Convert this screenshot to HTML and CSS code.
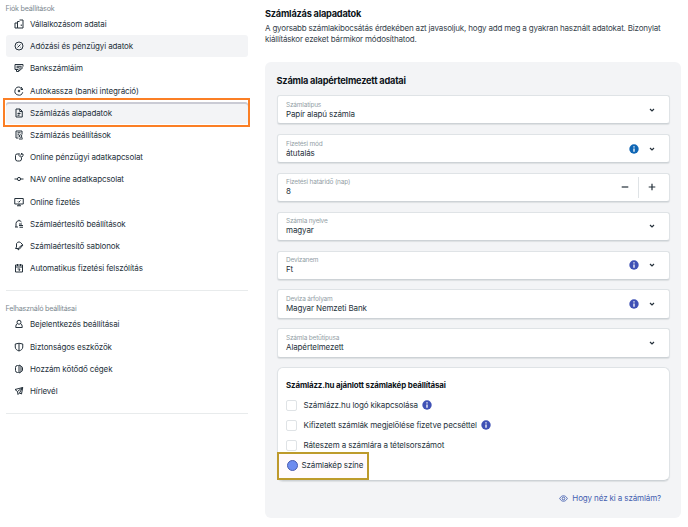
FILE: index.html
```html
<!DOCTYPE html>
<html lang="hu">
<head>
  <meta charset="UTF-8">
  <meta name="viewport" content="width=device-width, initial-scale=1.0">
  <title>Számlázás alapadatok</title>
  <link rel="stylesheet" href="styles.css">
</head>
<body>
  <!-- Oldalsáv -->
  <aside class="sidebar">
    <div class="menu-title">Fiók beállítások</div>
    <nav class="menu">
      <a class="menu-item"><svg class="icon" viewBox="0 0 20 20"><path d="M2 8h5v10H2zM7 18V5h4M11 2h7v16H7M14.500 11v3"/></svg>Vállalkozásom adatai</a>
      <a class="menu-item hovered"><svg class="icon" viewBox="0 0 20 20"><circle cx="10" cy="10" r="8"/><path d="M7 13l6-6M7 7.500h1M12 12.500h1"/></svg>Adózási és pénzügyi adatok</a>
      <a class="menu-item"><svg class="icon" viewBox="0 0 20 20"><path d="M18 7V3H2v10h6M5 6.500h10M5 9.500h6M5 13v4h4l9-8M9 17l1-4 6-6"/></svg>Bankszámláim</a>
      <a class="menu-item"><svg class="icon" viewBox="0 0 20 20"><path d="M12 2.500a8 8 0 1 0 5.500 10M14 2v5h4M17 6l-3-4"/><path class="solid" d="M10 7l3 3-3 3-3-3z"/></svg>Autokassza (banki integráció)</a>
      <a class="menu-item active"><svg class="icon" viewBox="0 0 20 20"><path d="M4 2h8l4.500 4.500V18H4zM11.500 2v5h5M7 11h6M7 14.500h4M10 9v4"/></svg>Számlázás alapadatok</a>
      <a class="menu-item"><svg class="icon" viewBox="0 0 20 20"><path d="M16 9V2H4v14h5M7 5.500h6M7 8.500h3M7 12h2"/><circle cx="13" cy="12" r="2.500"/><path d="M10 18h7M15 14l2 3"/></svg>Számlázás beállítások</a>
      <a class="menu-item"><svg class="icon" viewBox="0 0 20 20"><path d="M9 4H6a3 3 0 0 0-3 3v7a4 4 0 0 0 4 4h4a4 4 0 0 0 4-4v-3M10 2v5l3 3h3l2-3V4h-3V2M15 4l-2 3"/></svg>Online pénzügyi adatkapcsolat</a>
      <a class="menu-item"><svg class="icon" viewBox="0 0 20 20"><circle cx="10" cy="10" r="3.200"/><path d="M1 10h5.500M13.500 10H19"/></svg>NAV online adatkapcsolat</a>
      <a class="menu-item"><svg class="icon" viewBox="0 0 20 20"><path d="M1.500 3h17v11h-17zM6 17.500h8M10 14v3M8 9l1.500 1.500L13 7"/></svg>Online fizetés</a>
      <a class="menu-item"><svg class="icon" viewBox="0 0 20 20"><path d="M2 16h6M4 16V9a6 6 0 0 1 11-3M9 2.500h2M10 10h6M10 13h8M11 16.500h7"/></svg>Számlaértesítő beállítások</a>
      <a class="menu-item"><svg class="icon" viewBox="0 0 20 20"><path d="M8 15H3l2-3V8a5 5 0 0 1 8-5l4 4M8 18l1-4 8-7 1 1-7 8z"/></svg>Számlaértesítő sablonok</a>
      <a class="menu-item"><svg class="icon" viewBox="0 0 20 20"><path d="M3 4h14v14H3zM3 8h14M7 2v4M13 2v4M7 12h5l-2 4"/></svg>Automatikus fizetési felszólítás</a>
    </nav>
    <div class="menu-title second">Felhasználó beállításai</div>
    <nav class="menu last">
      <a class="menu-item"><svg class="icon" viewBox="0 0 20 20"><circle cx="10" cy="6.500" r="4"/><path d="M7 9c-2.500 1-3.500 4-3.500 8h13c0-4-1-7-3.500-8"/></svg>Bejelentkezés beállításai</a>
      <a class="menu-item"><svg class="icon" viewBox="0 0 20 20"><path d="M10 2.500L17.500 4v6c0 4-3 6.500-7.500 8-4.500-1.500-7.500-4-7.500-8V4zM10 3v15"/></svg>Biztonságos eszközök</a>
      <a class="menu-item"><svg class="icon" viewBox="0 0 20 20"><path d="M9 3H7a4 4 0 0 0-4 4v6a4 4 0 0 0 4 4h2M10 2v16l4-2V4zM14 5c2 0 3 1 3 3v4c0 2-1 3-3 3"/></svg>Hozzám kötődő cégek</a>
      <a class="menu-item"><svg class="icon" viewBox="0 0 20 20"><path d="M17.500 3L2 7l5 4 1 6 3-3 4 2zM7 11l10-8-6 11"/></svg>Hírlevél</a>
    </nav>
  </aside>

  <!-- Tartalom -->
  <main class="content">
    <h1>Számlázás alapadatok</h1>
    <p class="lead">A gyorsabb számlakibocsátás érdekében azt javasoljuk, hogy add meg a gyakran használt adatokat. Bizonylat<br>kiállításkor ezeket bármikor módosíthatod.</p>

    <section class="panel">
      <h2>Számla alapértelmezett adatai</h2>
      <div class="fields">
        <div class="field">
          <div class="field-text"><label>Számlatípus</label><span>Papír alapú számla</span></div>
          <svg class="chevron" viewBox="0 0 6 6"><path d="M1 2l2 2 2-2"/></svg>
        </div>
        <div class="field">
          <div class="field-text"><label>Fizetési mód</label><span>átutalás</span></div>
          <svg class="info blue" viewBox="0 0 10 10"><circle cx="5" cy="5" r="4.700"/><path d="M5 2.300v1.200M5 4.500v3.200"/></svg>
          <svg class="chevron" viewBox="0 0 6 6"><path d="M1 2l2 2 2-2"/></svg>
        </div>
        <div class="field">
          <div class="field-text"><label>Fizetési határidő (nap)</label><span>8</span></div>
          <svg class="step" viewBox="0 0 8 8"><path d="M.7 4h6.600"/></svg>
          <i class="divider"></i>
          <svg class="step" viewBox="0 0 8 8"><path d="M.7 4h6.600M4 .7v6.600"/></svg>
        </div>
        <div class="field">
          <div class="field-text"><label>Számla nyelve</label><span>magyar</span></div>
          <svg class="chevron" viewBox="0 0 6 6"><path d="M1 2l2 2 2-2"/></svg>
        </div>
        <div class="field">
          <div class="field-text"><label>Devizanem</label><span>Ft</span></div>
          <svg class="info" viewBox="0 0 10 10"><circle cx="5" cy="5" r="4.700"/><path d="M5 2.300v1.200M5 4.500v3.200"/></svg>
          <svg class="chevron" viewBox="0 0 6 6"><path d="M1 2l2 2 2-2"/></svg>
        </div>
        <div class="field">
          <div class="field-text"><label>Deviza árfolyam</label><span>Magyar Nemzeti Bank</span></div>
          <svg class="info" viewBox="0 0 10 10"><circle cx="5" cy="5" r="4.700"/><path d="M5 2.300v1.200M5 4.500v3.200"/></svg>
          <svg class="chevron" viewBox="0 0 6 6"><path d="M1 2l2 2 2-2"/></svg>
        </div>
        <div class="field">
          <div class="field-text"><label>Számla betűtípusa</label><span>Alapértelmezett</span></div>
          <svg class="chevron" viewBox="0 0 6 6"><path d="M1 2l2 2 2-2"/></svg>
        </div>
      </div>

      <div class="card">
        <h3>Számlázz.hu ajánlott számlakép beállításai</h3>
        <div class="check"><i class="box"></i><span>Számlázz.hu logó kikapcsolása</span>
          <svg class="info" viewBox="0 0 10 10"><circle cx="5" cy="5" r="4.700"/><path d="M5 2.300v1.200M5 4.500v3.200"/></svg></div>
        <div class="check"><i class="box"></i><span>Kifizetett számlák megjelölése fizetve pecséttel</span>
          <svg class="info" viewBox="0 0 10 10"><circle cx="5" cy="5" r="4.700"/><path d="M5 2.300v1.200M5 4.500v3.200"/></svg></div>
        <div class="check"><i class="box"></i><span>Ráteszem a számlára a tételsorszámot</span></div>
        <div class="color-row"><i class="dot"></i><span>Számlakép színe</span></div>
      </div>

      <a class="preview">
        <svg class="eye" viewBox="0 0 20 20"><path d="M1.500 10C4 5.500 7 4 10 4s6 1.500 8.500 6c-2.500 4.500-5.500 6-8.500 6s-6-1.500-8.500-6z"/><circle cx="10" cy="10" r="3"/></svg>
        <span>Hogy néz ki a számlám?</span>
      </a>
    </section>
  </main>
</body>
</html>
```

FILE: styles.css
```css
* {
  box-sizing: border-box;
}

body {
  font-family: Inter, sans-serif;
  margin: 0;
  height: 527px;
  background: #fff;
  color: #25313b;
  display: flex;
  font-size: 8px;
  letter-spacing: -0.12px;
  overflow: hidden;
}

h1, h2, h3, p {
  margin: 0;
  white-space: nowrap;
}

svg {
  flex: none;
  fill: none;
  stroke: currentColor;
}

/* Oldalsáv */
.sidebar {
  width: 248px;
  flex: none;
  padding: 4px 0 0 5.500px;
}

.menu-title {
  font-size: 7.200px;
  line-height: 9px;
  height: 9px;
  letter-spacing: -0.23px;
  color: #7c898f;
}

.menu-title.second {
  margin-top: 13px;
}

.menu {
  border-bottom: 1.500px solid #e8ebec;
  padding-bottom: 11px;
}

.menu-item {
  display: flex;
  align-items: center;
  height: 22.200px;
  padding-left: 8.500px;
  gap: 6px;
  border-radius: 3px;
  white-space: nowrap;
}

.icon {
  width: 10px;
  height: 10px;
  stroke-width: 2;
}

.icon .solid {
  fill: currentColor;
  stroke: none;
}

.hovered {
  background: #f3f4f6;
}

.active {
  position: relative;
  background: #f3f4f6;
  box-shadow: inset 0 2px 0 #cacbd4;
}

/* Kiemelés az aktív elem körül */
.active::after {
  content: "";
  position: absolute;
  inset: -4px -2px -3px -3px;
  border: 2px solid #fb7f25;
}

/* Tartalom */
.content {
  margin-left: 17px;
  width: 416px;
  padding-top: 8px;
}

h1 {
  font-size: 9.200px;
  line-height: 12px;
  letter-spacing: -0.22px;
  color: #0c1218;
}

.lead {
  margin-top: 3px;
  font-size: 8px;
  line-height: 11px;
  letter-spacing: -0.185px;
  color: #36424b;
}

.panel {
  margin-top: 17px;
  height: 456px;
  padding: 11px 11px 0 11.500px;
  background: #f3f4f6;
  border-radius: 6px;
}

h2 {
  font-size: 9.200px;
  line-height: 15px;
  letter-spacing: -0.2px;
  color: #0c1218;
}

.fields {
  display: flex;
  flex-direction: column;
  gap: 9.500px;
  margin-top: 7px;
}

.field {
  display: flex;
  align-items: center;
  height: 29.400px;
  padding: 0 14.500px 0 8.500px;
  background: #fff;
  border: 1px solid #dfe3e6;
  border-bottom-color: #cdd2d6;
  border-radius: 3px;
  box-shadow: 0 1px 1px rgba(30, 50, 60, 0.1);
}

.field-text {
  flex: 1;
  display: flex;
  flex-direction: column;
  padding-top: 1px;
}

.field-text label {
  font-size: 6.500px;
  line-height: 8px;
  letter-spacing: -0.2px;
  color: #93a0a6;
}

.field-text span {
  line-height: 11px;
}

.chevron {
  width: 6px;
  height: 6px;
  stroke-width: 1.200;
}

.info {
  width: 10px;
  height: 10px;
  color: #3f51b5;
}

.info.blue {
  color: #0f66b5;
}

.info circle {
  fill: currentColor;
  stroke: none;
}

.info path {
  stroke: #fff;
  stroke-width: 1.300;
}

.field .info {
  margin-right: 10px;
}

.step {
  width: 8px;
  height: 8px;
  margin-right: -1px;
  stroke-width: 1.200;
}

.divider {
  width: 1px;
  height: 21px;
  margin: 0 9px 0 10px;
  background: #dfe3e6;
}

.card {
  height: 114px;
  margin-top: 9.500px;
  padding: 10px 9px 0 8.500px;
  background: #fff;
  border: 1px solid #dfe3e6;
  border-bottom-color: #cdd2d6;
  border-radius: 6px;
  box-shadow: 0 1px 1px rgba(30, 50, 60, 0.1);
}

h3 {
  font-size: 7.900px;
  line-height: 14px;
  margin-bottom: 3px;
  color: #0c1218;
}

.check {
  display: flex;
  align-items: center;
  height: 20px;
}

.box {
  width: 11px;
  height: 11px;
  border: 1px solid #dfe3e6;
  border-radius: 2px;
  margin-right: 6.500px;
}

.check .info {
  margin-left: 4px;
}

.color-row {
  display: flex;
  align-items: center;
  width: 92px;
  height: 28px;
  margin: -3px 0 0 -9.500px;
  padding: 0 0 2px 8px;
  position: relative;
  background: #fffafd;
  border: 2px solid #bd9a2c;
}

.dot {
  width: 11px;
  height: 11px;
  margin-right: 4px;
  background: #6e8cf0;
  border: 1px solid #4a5cb0;
  border-radius: 50%;
}

.preview {
  display: flex;
  justify-content: flex-end;
  align-items: center;
  gap: 4px;
  margin-top: 11px;
  padding-right: 9px;
  color: #4460b0;
  line-height: 12px;
}

.eye {
  width: 9px;
  height: 9px;
  stroke-width: 2;
}
```
